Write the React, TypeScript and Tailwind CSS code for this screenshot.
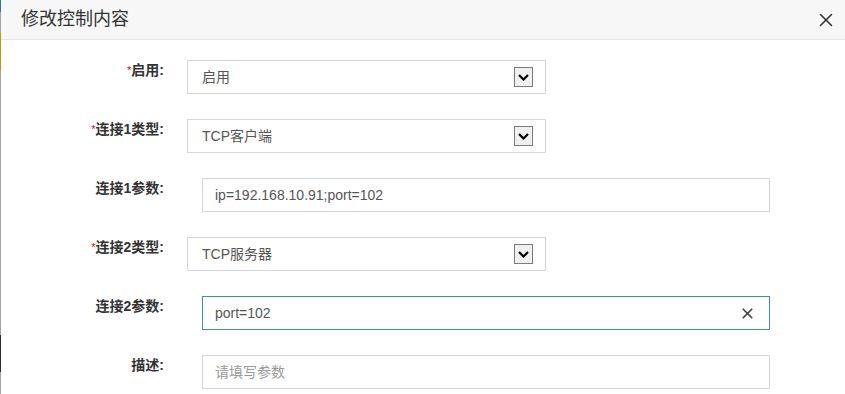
import { X } from 'lucide-react'

const font = { fontFamily: '"Liberation Sans", "Noto Sans CJK SC", sans-serif' }

function SelectArrow() {
  return (
    <div className="w-[19px] h-[20px] border border-[#7a7a7a] bg-[#f0f0f0] flex items-center justify-center">
      <svg width="11" height="7" viewBox="0 0 11 7">
        <path d="M1 1 L5.5 5.5 L10 1" fill="none" stroke="#000" strokeWidth="2.2" />
      </svg>
    </div>
  )
}

function Label({ text, required }: { text: string; required?: boolean }) {
  return (
    <div className="w-[163px] shrink-0 text-right leading-5 text-[14px] font-bold text-[#333]">
      {required && <span className="text-[#e00] text-[11px] align-top font-normal">*</span>}
      {text}:
    </div>
  )
}

function SelectRow({ label, value, required }: { label: string; value: string; required?: boolean }) {
  return (
    <div className="flex items-start">
      <Label text={label} required={required} />
      <div className="ml-[23px] w-[359px] h-[34px] border border-[#d2d6de] flex items-center justify-between pl-[14px] pr-[12px] text-[14px] text-[#555]">
        <span>{value}</span>
        <SelectArrow />
      </div>
    </div>
  )
}

function InputRow({ label, value, placeholder, focused }: { label: string; value?: string; placeholder?: string; focused?: boolean }) {
  return (
    <div className="flex items-start">
      <Label text={label} />
      <div
        className={`ml-[38px] w-[568px] h-[34px] border flex items-center justify-between pl-[12px] pr-[13px] text-[14px] ${
          focused ? 'border-[#3c8dbc]' : 'border-[#d2d6de]'
        }`}
      >
        {value ? <span className="text-[#555]">{value}</span> : <span className="text-[#999]">{placeholder}</span>}
        {focused && <X className="w-[17px] h-[17px] text-[#444]" strokeWidth={2.4} />}
      </div>
    </div>
  )
}

export default function App() {
  return (
    <div className="flex w-[845px] h-[394px] overflow-hidden bg-white" style={font}>
      {/* background peeking at left edge */}
      <div className="w-px flex flex-col shrink-0 bg-[#a3a3a3]">
        <div className="h-[12px] bg-[#3a6ea5]" />
        <div className="h-[21px]" />
        <div className="h-[37px] bg-[#b8962e]" />
        <div className="h-[265px]" />
        <div className="h-[37px] bg-[#2a2a2a]" />
      </div>

      <div className="flex-1 flex flex-col">
        <div className="h-[40px] shrink-0 bg-[#f7f7f7] border-b border-[#e5e5e5] flex items-center justify-between pl-[20px] pr-[8px]">
          <h3 className="text-[18px] text-[#333]">修改控制内容</h3>
          <X className="w-[22px] h-[22px] text-[#333]" strokeWidth={1.7} />
        </div>

        <div className="flex flex-col gap-[25px] pt-[20px]">
          <SelectRow label="启用" value="启用" required />
          <SelectRow label="连接1类型" value="TCP客户端" required />
          <InputRow label="连接1参数" value="ip=192.168.10.91;port=102" />
          <SelectRow label="连接2类型" value="TCP服务器" required />
          <InputRow label="连接2参数" value="port=102" focused />
          <InputRow label="描述" placeholder="请填写参数" />
        </div>
      </div>
    </div>
  )
}
